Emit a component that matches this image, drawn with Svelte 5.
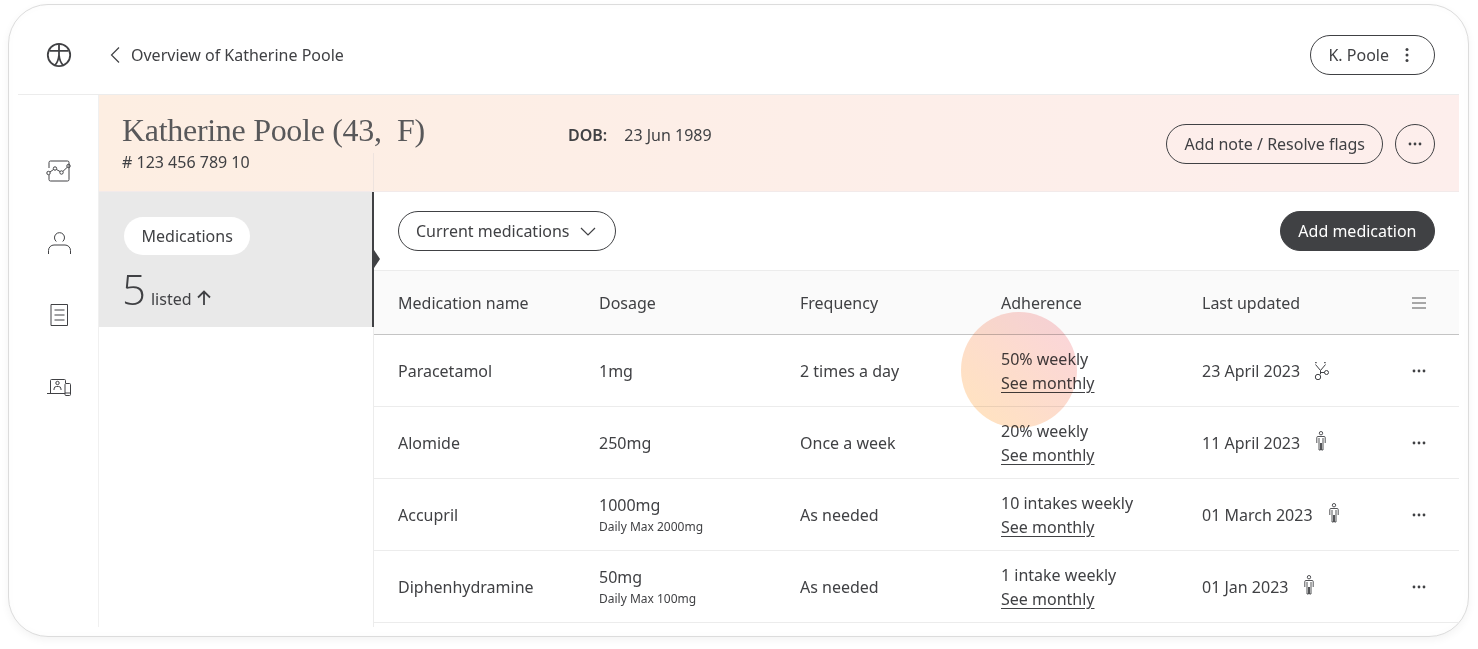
<script>
  const columns = ['Medication name', 'Dosage', 'Frequency', 'Adherence', 'Last updated'];

  const medications = [
    { name: 'Paracetamol', dose: '1mg', max: '', freq: '2 times a day', adherence: '50% weekly', updated: '23 April 2023', by: 'doctor' },
    { name: 'Alomide', dose: '250mg', max: '', freq: 'Once a week', adherence: '20% weekly', updated: '11 April 2023', by: 'patient' },
    { name: 'Accupril', dose: '1000mg', max: 'Daily Max 2000mg', freq: 'As needed', adherence: '10 intakes weekly', updated: '01 March 2023', by: 'patient' },
    { name: 'Diphenhydramine', dose: '50mg', max: 'Daily Max 100mg', freq: 'As needed', adherence: '1 intake weekly', updated: '01 Jan 2023', by: 'patient' }
  ];
</script>

<div class="page">
  <div class="card">
    <header class="topbar">
      <div class="logo">
        <svg width="26" height="26" viewBox="0 0 26 26" fill="none" stroke="#404144" stroke-width="1.8">
          <circle cx="13" cy="13" r="11.2" />
          <path d="M3.500 8.800h19M13 2v12M13 13c-.4 4.500-1.800 8-4.300 10.400M13 13c.4 4.500 1.800 8 4.300 10.400" />
        </svg>
      </div>
      <a class="back" href="#overview">
        <svg width="12" height="18" viewBox="0 0 12 18" fill="none" stroke="#404144" stroke-width="1.2">
          <path d="M10 1.500 2.500 9l7.500 7.500" />
        </svg>
        Overview of Katherine Poole
      </a>
      <button class="pill user">
        K. Poole
        <svg width="4" height="16" viewBox="0 0 4 16" fill="#404144">
          <circle cx="2" cy="2.500" r="1.500" /><circle cx="2" cy="8" r="1.500" /><circle cx="2" cy="13.500" r="1.500" />
        </svg>
      </button>
    </header>

    <div class="body">
      <nav class="rail">
        <span class="rail-item">
          <svg width="26" height="24" viewBox="0 0 26 24" fill="none" stroke="#404144" stroke-width="1">
            <path d="M3 9V3.500A1.500 1.500 0 0 1 4.500 2h17A1.500 1.500 0 0 1 23 3.500V20.500a1.500 1.500 0 0 1-1.500 1.500h-17A1.500 1.500 0 0 1 3 20.500V16" />
            <circle cx="2.500" cy="14" r="1.700" /><circle cx="9" cy="9.500" r="1.700" /><circle cx="15.500" cy="13.500" r="1.700" /><circle cx="22.500" cy="7" r="1.700" />
            <path d="m4 13 3.500-2.500M10.500 10.500l3.500 2M17 12.300l4.200-4" />
          </svg>
        </span>
        <span class="rail-item">
          <svg width="24" height="24" viewBox="0 0 24 24" fill="none" stroke="#404144" stroke-width="1">
            <path d="M9.300 10.500a5 5 0 1 1 6.400 0" />
            <path d="M1.500 23v-3.500A5.500 5.500 0 0 1 7 14h11a5.500 5.500 0 0 1 5.500 5.500V23" />
          </svg>
        </span>
        <span class="rail-item">
          <svg width="20" height="24" viewBox="0 0 20 24" fill="none" stroke="#404144" stroke-width="1">
            <path d="M2 1.500h16.500v21H2zM5.500 7h10M5.500 12h10M5.500 17h10" />
          </svg>
        </span>
        <span class="rail-item">
          <svg width="24" height="17" viewBox="0 0 24 17" fill="none" stroke="#404144" stroke-width="1">
            <path d="M18.500 4V1.500a1 1 0 0 0-1-1h-13a1 1 0 0 0-1 1V14M0 14.500h18" />
            <circle cx="10.500" cy="4" r="1.700" />
            <path d="M7 11v-1a2.500 2.500 0 0 1 2.500-2.500h2A2.500 2.500 0 0 1 14 10v1" />
            <rect x="18" y="4.500" width="5.500" height="12" rx="1" fill="#fff" />
            <path d="M18 14h5.500" />
          </svg>
        </span>
      </nav>

      <div class="content">
        <section class="banner">
          <div class="identity">
            <h1>Katherine Poole (43,&nbsp; F)</h1>
            <p># 123 456 789 10</p>
          </div>
          <div class="dob"><strong>DOB:</strong><span>23 Jun 1989</span></div>
          <div class="banner-actions">
            <button class="pill">Add note / Resolve flags</button>
            <button class="pill round" aria-label="More">
              <svg width="14" height="4" viewBox="0 0 14 4" fill="#404144">
                <circle cx="2" cy="2" r="1.400" /><circle cx="7" cy="2" r="1.400" /><circle cx="12" cy="2" r="1.400" />
              </svg>
            </button>
          </div>
        </section>

        <div class="split">
          <aside class="side">
            <div class="side-item">
              <span class="tag">Medications</span>
              <div class="count">
                <span class="num">5</span>
                <span class="listed">listed</span>
                <svg width="14" height="15" viewBox="0 0 14 15" fill="none" stroke="#404144" stroke-width="1.800">
                  <path d="M7 15V1.500M1 7.500l6-6 6 6" />
                </svg>
              </div>
              <span class="notch"></span>
            </div>
          </aside>

          <main class="main">
            <div class="toolbar">
              <button class="pill select">
                Current medications
                <svg width="16" height="9" viewBox="0 0 16 9" fill="none" stroke="#404144" stroke-width="1.200">
                  <path d="m1 1 7 7 7-7" />
                </svg>
              </button>
              <button class="pill dark">Add medication</button>
            </div>

            <div class="row head">
              {#each columns as col}
                <div>{col}</div>
              {/each}
              <div class="end">
                <svg width="16" height="12" viewBox="0 0 16 12" fill="none" stroke="#8c8c8c" stroke-width="1.400">
                  <path d="M1 1h14M1 6h14M1 11h14" />
                </svg>
              </div>
            </div>

            {#each medications as med}
              <div class="row">
                <div>{med.name}</div>
                <div class="dose">
                  <div>{med.dose}</div>
                  {#if med.max}<div class="max">{med.max}</div>{/if}
                </div>
                <div>{med.freq}</div>
                <div class="adh">
                  <div>{med.adherence}</div>
                  <a href="#monthly">See monthly</a>
                </div>
                <div class="updated">
                  {med.updated}
                  {#if med.by === 'doctor'}
                    <svg width="16" height="18" viewBox="0 0 16 18" fill="none" stroke="#404144" stroke-width="1">
                      <path d="M1 .7h1.800M10 .7h1.800" />
                      <path d="M1.500 2.500 6.500 8.500l5-6" />
                      <path d="M6.500 8.500v3.800" />
                      <circle cx="4" cy="15" r="2.700" />
                      <circle cx="12.500" cy="10.500" r="2" />
                      <path d="M6.500 10.500h4" />
                    </svg>
                  {:else}
                    <svg class="person" width="10" height="20" viewBox="0 0 10 20" fill="none" stroke="#404144" stroke-width="0.900">
                      <circle cx="5" cy="2.200" r="1.700" />
                      <path d="M.8 12V6.500a1 1 0 0 1 1-1h6.400a1 1 0 0 1 1 1V12M3 7v12h1.500v-7M7 7v12H5.500v-7" />
                    </svg>
                  {/if}
                </div>
                <div class="end dots">
                  <svg width="14" height="4" viewBox="0 0 14 4" fill="#404144">
                    <circle cx="2" cy="2" r="1.400" /><circle cx="7" cy="2" r="1.400" /><circle cx="12" cy="2" r="1.400" />
                  </svg>
                </div>
              </div>
            {/each}
          </main>
        </div>
      </div>
    </div>

    <span class="pulse"></span>
  </div>
</div>

<style>
  :global(body) {
    margin: 0;
    background: #fff;
  }

  .page {
    width: 1478px;
    height: 649px;
    padding: 4px 9px 12px 8px;
    box-sizing: border-box;
    font-family: "Noto Sans", sans-serif;
    font-size: 16px;
    color: #404144;
    overflow: hidden;
  }

  .card {
    position: relative;
    height: 633px;
    box-sizing: border-box;
    padding: 0 9px 9px;
    display: flex;
    flex-direction: column;
    background: #fff;
    border: 1px solid #dcdcdc;
    border-radius: 40px;
    box-shadow: 0 3px 8px rgba(0, 0, 0, 0.05), inset 0 0 8px rgba(0, 0, 0, 0.02);
  }

  button {
    font: inherit;
    color: inherit;
    background: none;
  }

  .pill {
    height: 40px;
    box-sizing: border-box;
    padding: 0 17px;
    display: inline-flex;
    align-items: center;
    border: 1px solid #404144;
    border-radius: 20px;
    white-space: nowrap;
  }

  .topbar {
    height: 90px;
    flex: none;
    box-sizing: border-box;
    padding-top: 10px;
    padding-right: 24px;
    display: flex;
    align-items: center;
    border-bottom: 1px solid #ececec;
  }

  .logo {
    width: 81px;
    display: flex;
    justify-content: center;
  }

  .back {
    display: flex;
    align-items: center;
    gap: 10px;
    margin-left: 10px;
    color: inherit;
    text-decoration: none;
  }

  .user {
    margin-left: auto;
    gap: 16px;
    padding-right: 25px;
  }

  .body {
    flex: 1;
    display: flex;
    min-height: 0;
  }

  .rail {
    width: 81px;
    height: 532px;
    flex: none;
    box-sizing: border-box;
    padding-top: 40px;
    padding-left: 2px;
    display: grid;
    grid-auto-rows: 72px;
    justify-items: center;
    align-items: center;
    border-right: 1px solid #f0f0f0;
  }

  .rail-item {
    display: flex;
  }

  .content {
    flex: 1;
    min-width: 0;
    display: flex;
    flex-direction: column;
  }

  .banner {
    position: relative;
    height: 97px;
    flex: none;
    box-sizing: border-box;
    padding-right: 24px;
    display: flex;
    background: linear-gradient(90deg, #fdeee2 0%, #fdeee9 60%, #fdeeec 100%);
    border-bottom: 1px solid #f2eaea;
  }

  .banner::after {
    content: '';
    position: absolute;
    left: 274px;
    top: 58px;
    bottom: 0;
    width: 1px;
    background: #eee3de;
  }

  .identity {
    width: 469px;
    flex: none;
    padding-left: 23px;
    box-sizing: border-box;
  }

  h1 {
    margin: 15px 0 0;
    font-family: "Liberation Serif", serif;
    font-size: 32px;
    line-height: 40px;
    font-weight: 400;
    letter-spacing: -0.3px;
    color: #58585a;
  }

  .identity p {
    margin: 0;
    line-height: 24px;
  }

  .dob {
    display: flex;
    gap: 17px;
    margin-top: 28px;
    line-height: 24px;
  }

  .dob strong {
    font-weight: 600;
  }

  .banner-actions {
    margin-left: auto;
    margin-top: 29px;
    display: flex;
    gap: 12px;
  }

  .round {
    width: 40px;
    padding: 0;
    justify-content: center;
  }

  .split {
    flex: 1;
    display: flex;
    min-height: 0;
  }

  .side {
    width: 275px;
    flex: none;
    border-right: 1px solid #ececec;
    box-sizing: border-box;
    position: relative;
  }

  .side-item {
    position: relative;
    width: 275px;
    height: 135px;
    box-sizing: border-box;
    padding: 25px 0 0 25px;
    background: #e9e9e9;
    border-right: 2px solid #404144;
  }

  .tag {
    display: inline-flex;
    align-items: center;
    height: 38px;
    padding: 0 17.5px;
    background: #fff;
    border-radius: 19px;
  }

  .count {
    display: flex;
    align-items: baseline;
    margin-top: 9px;
  }

  .num {
    font-size: 42px;
    line-height: 50px;
    font-weight: 300;
    font-family: "Open Sans", sans-serif;
    margin-left: -2px;
    margin-right: 5px;
  }

  .listed {
    margin-right: 5px;
  }

  .notch {
    position: absolute;
    right: -8px;
    top: 58px;
    width: 0;
    height: 0;
    border-left: 6px solid #404144;
    border-top: 9px solid transparent;
    border-bottom: 9px solid transparent;
  }

  .main {
    flex: 1;
    min-width: 0;
    overflow: hidden;
  }

  .toolbar {
    height: 78px;
    box-sizing: border-box;
    padding: 0 24px;
    display: flex;
    align-items: center;
    justify-content: space-between;
  }

  .select {
    gap: 10px;
    padding-right: 19px;
  }

  .dark {
    padding: 0 17.5px;
    background: #404144;
    border-color: #404144;
    color: #fff;
  }

  .row {
    height: 72px;
    box-sizing: border-box;
    padding-left: 24px;
    display: grid;
    grid-template-columns: 201px 201px 201px 201px 1fr 48px;
    align-items: center;
    border-bottom: 1px solid #ececec;
  }

  .head {
    height: 65px;
    padding-top: 1px;
    background: #fafafa;
    border-top: 1px solid #ececec;
    border-bottom: 1px solid #c4c4c4;
  }

  .end {
    display: flex;
  }

  .dots {
    padding-left: 1px;
  }

  .dose {
    line-height: 24px;
  }

  .max {
    font-size: 12px;
    line-height: 20px;
  }

  .adh {
    line-height: 24px;
  }

  .adh a {
    color: inherit;
    text-decoration: underline;
    text-underline-offset: 3px;
  }

  .updated {
    display: flex;
    align-items: center;
    gap: 14px;
  }

  .person {
    margin-top: -4px;
    margin-left: 2px;
  }

  .pulse {
    position: absolute;
    left: 952px;
    top: 307px;
    width: 116px;
    height: 116px;
    border-radius: 50%;
    background: linear-gradient(45deg, #ffe2c2 15%, #fbd6d8 85%);
    mix-blend-mode: multiply;
    pointer-events: none;
  }
</style>
